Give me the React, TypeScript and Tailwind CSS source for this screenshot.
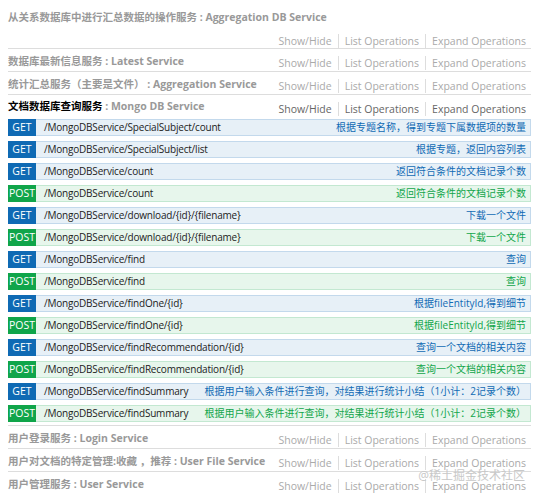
import React from "react";

type Op = { m: "GET" | "POST"; path: string; desc: string };

const ops: Op[] = [
  { m: "GET", path: "/MongoDBService/SpecialSubject/count", desc: "根据专题名称，得到专题下属数据项的数量" },
  { m: "GET", path: "/MongoDBService/SpecialSubject/list", desc: "根据专题，返回内容列表" },
  { m: "GET", path: "/MongoDBService/count", desc: "返回符合条件的文档记录个数" },
  { m: "POST", path: "/MongoDBService/count", desc: "返回符合条件的文档记录个数" },
  { m: "GET", path: "/MongoDBService/download/{id}/{filename}", desc: "下载一个文件" },
  { m: "POST", path: "/MongoDBService/download/{id}/{filename}", desc: "下载一个文件" },
  { m: "GET", path: "/MongoDBService/find", desc: "查询" },
  { m: "POST", path: "/MongoDBService/find", desc: "查询" },
  { m: "GET", path: "/MongoDBService/findOne/{id}", desc: "根据fileEntityId,得到细节" },
  { m: "POST", path: "/MongoDBService/findOne/{id}", desc: "根据fileEntityId,得到细节" },
  { m: "GET", path: "/MongoDBService/findRecommendation/{id}", desc: "查询一个文档的相关内容" },
  { m: "POST", path: "/MongoDBService/findRecommendation/{id}", desc: "查询一个文档的相关内容" },
  { m: "GET", path: "/MongoDBService/findSummary", desc: "根据用户输入条件进行查询，对结果进行统计小结（1小计：2记录个数）" },
  { m: "POST", path: "/MongoDBService/findSummary", desc: "根据用户输入条件进行查询，对结果进行统计小结（1小计：2记录个数）" },
];

function Options({ active }: { active?: boolean }) {
  const c = active ? "text-[#666]" : "text-[#aaa]";
  return (
    <div className={`flex items-center leading-[14px] text-[10.5px] ${c}`}>
      <span className="pr-[6px]">Show/Hide</span>
      <span className="px-[6px] border-l border-[#ddd]">List Operations</span>
      <span className="pl-[6px] border-l border-[#ddd]">Expand Operations</span>
    </div>
  );
}

function Section({ zh, en, last }: { zh: string; en: string; last?: boolean }) {
  return (
    <div className={`flex justify-between items-start h-[23px] ${last ? "" : "border-b border-[#ddd]"} box-border`}>
      <div className="mt-[5px] leading-[14px] text-[10.5px] font-bold text-[#999]">
        {zh} : {en}
      </div>
      <div className="mt-[7px] pr-[5px]">
        <Options />
      </div>
    </div>
  );
}

export default function App() {
  return (
    <div
      className="relative w-[538px] h-[496px] bg-white overflow-hidden"
      style={{ fontFamily: '"Open Sans", "Noto Sans CJK SC", sans-serif' }}
    >
      <div className="ml-[8px] w-[523px]">
        {/* first section, wrapped */}
        <div className="flex flex-col border-b border-[#ddd] h-[49px] box-border">
          <div className="mt-[10px] leading-[14px] text-[10.5px] font-bold text-[#999]">
            从关系数据库中进行汇总数据的操作服务 : Aggregation DB Service
          </div>
          <div className="self-end mt-[10px] pr-[5px]">
            <Options />
          </div>
        </div>
        <Section zh="数据库最新信息服务" en="Latest Service" />
        <Section zh="统计汇总服务（主要是文件）" en="Aggregation Service" />

        {/* active section */}
        <div className="border-b border-[#ddd] pb-[3px]">
          <div className="flex justify-between items-start h-[23px]">
            <div className="mt-[4px] leading-[14px] text-[10.5px] font-bold">
              <span className="text-black">文档数据库查询服务</span>
              <span className="text-[#999]"> : Mongo DB Service</span>
            </div>
            <div className="mt-[7px] pr-[5px]">
              <Options active />
            </div>
          </div>
          <div className="flex flex-col gap-[5px] pt-[1px]">
            {ops.map((o, i) => {
              const get = o.m === "GET";
              return (
                <div
                  key={i}
                  className={`flex items-center h-[17px] border box-border ${
                    get ? "bg-[#e7f0f7] border-[#c3d9ec]" : "bg-[#e7f6ec] border-[#c3e8d1]"
                  }`}
                >
                  <div
                    className={`-my-px -ml-px w-[28px] h-[17px] flex items-center justify-center text-white text-[10.5px] ${
                      get ? "bg-[#0f6ab4]" : "bg-[#10a54a]"
                    }`}
                  >
                    {o.m}
                  </div>
                  <div className="ml-[8px] text-[10px] text-[#222] whitespace-nowrap tracking-[-0.2px]">{o.path}</div>
                  <div
                    className={`ml-auto pr-[4px] text-[10px] whitespace-nowrap ${
                      get ? "text-[#0f6ab4]" : "text-[#10a54a]"
                    }`}
                  >
                    {o.desc}
                  </div>
                </div>
              );
            })}
          </div>
        </div>

        <Section zh="用户登录服务" en="Login Service" />
        <Section zh="用户对文档的特定管理:收藏 ，推荐" en="User File Service" />
        <Section zh="用户管理服务" en="User Service" last />
      </div>

      <div className="absolute right-[13px] top-[467px] text-[12px] leading-[18px] text-[#c8c8c8]">
        @稀土掘金技术社区
      </div>
    </div>
  );
}
